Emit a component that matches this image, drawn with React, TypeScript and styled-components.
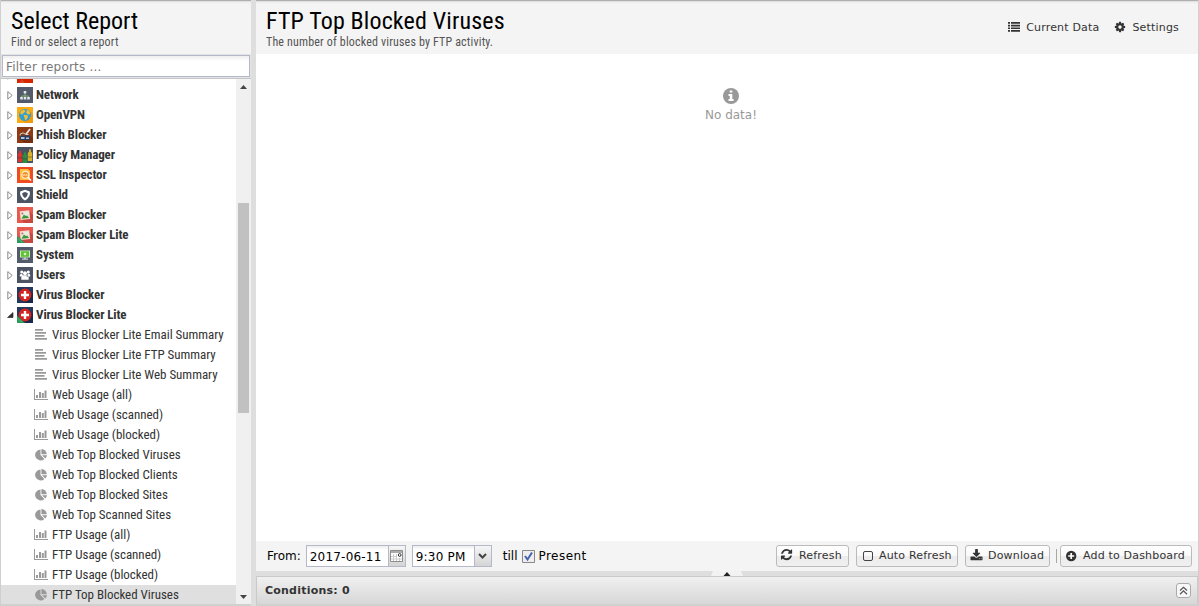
import React from 'react';
import styled, { createGlobalStyle } from 'styled-components';

type ReportIcon = 'text' | 'chart' | 'pie';

type CategoryIcon =
  | 'intrusion'
  | 'network'
  | 'openvpn'
  | 'phish'
  | 'policy'
  | 'ssl'
  | 'shield'
  | 'spam'
  | 'spamLite'
  | 'system'
  | 'users'
  | 'virus'
  | 'virusLite';

interface Category {
  name: string;
  icon: CategoryIcon;
  expanded?: boolean;
}

interface Report {
  name: string;
  icon: ReportIcon;
  selected?: boolean;
}

const categories: Category[] = [
  { name: 'Intrusion Prevention', icon: 'intrusion' },
  { name: 'Network', icon: 'network' },
  { name: 'OpenVPN', icon: 'openvpn' },
  { name: 'Phish Blocker', icon: 'phish' },
  { name: 'Policy Manager', icon: 'policy' },
  { name: 'SSL Inspector', icon: 'ssl' },
  { name: 'Shield', icon: 'shield' },
  { name: 'Spam Blocker', icon: 'spam' },
  { name: 'Spam Blocker Lite', icon: 'spamLite' },
  { name: 'System', icon: 'system' },
  { name: 'Users', icon: 'users' },
  { name: 'Virus Blocker', icon: 'virus' },
  { name: 'Virus Blocker Lite', icon: 'virusLite', expanded: true },
];

const reports: Report[] = [
  { name: 'Virus Blocker Lite Email Summary', icon: 'text' },
  { name: 'Virus Blocker Lite FTP Summary', icon: 'text' },
  { name: 'Virus Blocker Lite Web Summary', icon: 'text' },
  { name: 'Web Usage (all)', icon: 'chart' },
  { name: 'Web Usage (scanned)', icon: 'chart' },
  { name: 'Web Usage (blocked)', icon: 'chart' },
  { name: 'Web Top Blocked Viruses', icon: 'pie' },
  { name: 'Web Top Blocked Clients', icon: 'pie' },
  { name: 'Web Top Blocked Sites', icon: 'pie' },
  { name: 'Web Top Scanned Sites', icon: 'pie' },
  { name: 'FTP Usage (all)', icon: 'chart' },
  { name: 'FTP Usage (scanned)', icon: 'chart' },
  { name: 'FTP Usage (blocked)', icon: 'chart' },
  { name: 'FTP Top Blocked Viruses', icon: 'pie', selected: true },
];

const GlobalStyle = createGlobalStyle`
  * {
    box-sizing: border-box;
  }

  body {
    margin: 0;
    overflow: hidden;
    font-family: 'DejaVu Sans', sans-serif;
    font-size: 12px;
    color: #000;
  }

  svg {
    display: block;
    flex: none;
  }
`;

const Page = styled.div`
  display: flex;
  width: 1199px;
  height: 606px;
  padding: 0 1px;
  background: #cfcfcf;
`;

const Sidebar = styled.aside`
  display: flex;
  flex-direction: column;
  width: 250px;
  background: #f4f4f4;
`;

const VerticalSplitter = styled.div`
  width: 5px;
  background: #dedede;
`;

const Main = styled.main`
  display: flex;
  flex: 1;
  flex-direction: column;
  min-width: 0;
  background: #fff;
`;

const PanelHeader = styled.header`
  display: flex;
  justify-content: space-between;
  flex: none;
  height: 54px;
  padding: 8px 19px 0 10px;
  background: linear-gradient(#a9a9a9 0, #b5b5b5 1px, #d8d8d8 1px, #ececec 2px, #f4f4f4 4px);
`;

const HeaderTitle = styled.h1<{ $spacing?: number }>`
  margin: 0;
  font-family: 'Roboto Condensed', Roboto, sans-serif;
  font-size: 24px;
  font-weight: 400;
  line-height: 27px;
  letter-spacing: ${({ $spacing = 0 }) => $spacing}px;
  white-space: nowrap;
`;

const HeaderSubtitle = styled.div`
  font-family: 'Roboto Condensed', Roboto, sans-serif;
  font-size: 12px;
  line-height: 14px;
  letter-spacing: 0.16px;
  white-space: nowrap;
  color: #555;
`;

const HeaderActions = styled.div`
  display: flex;
  align-items: center;
  gap: 15px;
  height: 38px;
`;

const HeaderAction = styled.div`
  display: flex;
  align-items: center;
  gap: 6px;
  font-size: 11px;
  letter-spacing: 0.18px;
  color: #333;
`;

const FilterBar = styled.div`
  flex: none;
  height: 25px;
  padding: 1px;
  background: #e3e3e3;
  border-bottom: 1px solid #c6c6c6;
`;

const FilterInput = styled.input`
  display: block;
  width: 248px;
  height: 22px;
  padding: 2px 3px 0;
  border: 1px solid #b5b8c8;
  outline: none;
  background: linear-gradient(#eee, #fff 5px);
  font-family: 'DejaVu Sans', sans-serif;
  font-size: 12px;
  letter-spacing: 0.22px;

  &::placeholder {
    color: #777;
    opacity: 1;
  }
`;

const TreeArea = styled.div`
  display: flex;
  height: 525px;
  overflow: hidden;
  background: #fff;
`;

const Tree = styled.div`
  flex: 1;
  height: 525px;
  overflow: hidden;
  font-family: 'Roboto Condensed', Roboto, sans-serif;
  font-size: 13px;
  color: #333;
`;

const TreeRows = styled.div`
  margin-top: -14px;
`;

const NodeText = styled.span`
  padding-bottom: 2px;
  white-space: nowrap;
`;

const CategoryRow = styled.div`
  display: flex;
  align-items: center;
  height: 20px;
  padding-left: 5px;
  font-weight: 700;
  letter-spacing: -0.13px;

  svg:first-child {
    margin-right: 3px;
  }

  svg + svg {
    margin-right: 3px;
  }
`;

const ReportRow = styled.div<{ $selected?: boolean }>`
  display: flex;
  align-items: center;
  gap: 3px;
  height: 20px;
  padding-left: 33px;
  letter-spacing: -0.03px;
  background: ${({ $selected }) => ($selected ? '#dfdfdf' : 'transparent')};
`;

const ScrollTrack = styled.div`
  display: flex;
  flex-direction: column;
  justify-content: space-between;
  align-items: center;
  width: 15px;
  padding: 6px 2px 5px;
  background: #f0f0f0;
`;

const ScrollThumb = styled.div`
  width: 11px;
  height: 210px;
  margin-bottom: 68px;
  background: #c1c1c1;
`;

const BottomEdge = styled.div`
  height: 2px;
  background: #d0d0d0;
`;

const Content = styled.section`
  display: flex;
  flex: 1;
  flex-direction: column;
  align-items: center;
  gap: 3px;
  padding: 34px 0 0 8px;
  color: #999;
`;

const EmptyText = styled.div`
  font-size: 12px;
  line-height: 16px;
`;

const Toolbar = styled.div`
  display: flex;
  align-items: center;
  flex: none;
  height: 30px;
  padding: 0 6px 0 11px;
  background: #f4f4f4;
`;

const ToolbarLabel = styled.span<{ $spacing?: number }>`
  font-size: 12px;
  letter-spacing: ${({ $spacing = 0 }) => $spacing}px;
  white-space: nowrap;
`;

const PickerField = styled.div<{ $width: number }>`
  display: flex;
  width: ${({ $width }) => $width}px;
  height: 22px;
  border: 1px solid #b5b8c8;
  background: linear-gradient(#eee, #fff 4px);
`;

const PickerValue = styled.div`
  flex: 1;
  padding-left: 3px;
  line-height: 22px;
  letter-spacing: 0.2px;
  white-space: nowrap;
`;

const PickerTrigger = styled.div`
  display: flex;
  align-items: center;
  justify-content: center;
  width: 17px;
  border-left: 1px solid #b5b8c8;
  background: linear-gradient(#f6f6f6, #d4d4d4);
`;

const Spacer = styled.div<{ $width?: number }>`
  flex: ${({ $width }) => ($width ? `0 0 ${$width}px` : '1')};
`;

const ToolButton = styled.button<{ $width: number }>`
  display: flex;
  align-items: center;
  gap: 5px;
  width: ${({ $width }) => $width}px;
  height: 22px;
  padding: 0 0 1px 4px;
  border: 1px solid #bbb;
  border-radius: 3px;
  background: linear-gradient(#fff, #f9f9f9 48%, #ececec 52%, #f0f0f0);
  font-family: 'DejaVu Sans', sans-serif;
  font-size: 11px;
  letter-spacing: 0.18px;
  color: #333;
  white-space: nowrap;
`;

const Separator = styled.div`
  width: 1px;
  height: 14px;
  margin: 0 3px 0 6px;
  background: #aca899;
`;

const HorizontalSplitter = styled.div`
  display: flex;
  flex: none;
  justify-content: center;
  height: 5px;
  background: #dedede;
`;

const ConditionsBar = styled.footer`
  display: flex;
  align-items: center;
  justify-content: space-between;
  flex: none;
  height: 28px;
  padding: 0 6px 0 8px;
  border: 1px solid #c9c9c9;
  border-bottom: 0;
  background: linear-gradient(#f0f0f0, #d7d7d7);
  font-size: 11px;
  font-weight: 700;
  letter-spacing: 0.22px;
  color: #333;
`;

const CollapseTool = styled.div`
  display: flex;
  align-items: center;
  justify-content: center;
  width: 15px;
  height: 15px;
  border: 1px solid #aaa;
  border-radius: 3px;
  background: #f7f7f7;
`;

const REFRESH_PATH =
  'M1511 928q0 5-1 7-64 268-268 434.5t-478 166.5q-146 0-282.5-55t-243.5-157l-129 129q-19 19-45 19t-45-19-19-45v-448q0-26 19-45t45-19h448q26 0 45 19t19 45-19 45l-137 137q71 66 161 102t187 36q134 0 250-65t186-179q11-17 53-117 8-23 30-23h192q13 0 22.5 9.5t9.5 22.5zm25-800v448q0 26-19 45t-45 19h-448q-26 0-45-19t-19-45 19-45l138-138q-148-137-349-137-134 0-250 65t-186 179q-11 17-53 117-8 23-30 23h-199q-13 0-22.5-9.5t-9.5-22.5v-7q65-268 270-434.5t480-166.5q146 0 284 55.5t245 156.5l130-129q19-19 45-19t45 19 19 45z';
const DOWNLOAD_PATH =
  'M1344 1344q0-26-19-45t-45-19-45 19-19 45 19 45 45 19 45-19 19-45zm256 0q0-26-19-45t-45-19-45 19-19 45 19 45 45 19 45-19 19-45zm128-224v320q0 40-28 68t-68 28h-1472q-40 0-68-28t-28-68v-320q0-40 28-68t68-28h465l135 136q58 56 136 56t136-56l136-136h464q40 0 68 28t28 68zm-325-569q17 41-14 70l-448 448q-18 19-45 19t-45-19l-448-448q-31-29-14-70 17-39 59-39h256v-448q0-26 19-45t45-19h256q26 0 45 19t19 45v448h256q42 0 59 39z';
const COG_PATH =
  'M1152 896q0-106-75-181t-181-75-181 75-75 181 75 181 181 75 181-75 75-181zm512-109v222q0 12-8 23t-20 13l-185 28q-19 54-39 91 35 50 107 138 10 12 10 25t-9 23q-27 37-99 108t-94 71q-12 0-26-9l-138-108q-44 23-91 38-16 136-29 186-7 28-36 28h-222q-14 0-24.5-8.5t-11.5-21.5l-28-184q-49-16-90-37l-141 107q-10 9-25 9-14 0-25-11-126-114-165-168-7-10-7-23 0-12 8-23 15-21 51-66.5t54-70.5q-27-50-41-99l-183-27q-13-2-21-12.5t-8-23.5v-222q0-12 8-23t19-13l186-28q14-46 39-92-40-57-107-138-10-12-10-24 0-10 9-23 26-36 98.5-107.5t94.5-71.5q13 0 26 10l138 107q44-23 91-38 16-136 29-186 7-28 36-28h222q14 0 24.5 8.5t11.5 21.5l28 184q49 16 90 37l142-107q9-9 24-9 13 0 25 10 129 119 165 170 7 8 7 22 0 12-8 23-15 21-51 66.5t-54 70.5q26 50 41 98l183 28q13 2 21 12.5t8 23.5z';

const SolidIcon: React.FC<{ path: string; size?: number }> = ({ path, size = 14 }) => (
  <svg width={size} height={size} viewBox="0 0 1792 1792" fill="currentColor">
    <path d={path} />
  </svg>
);

const LITE_CORNER = (
  <>
    <path d="M0 8.5 L8 16 H0 Z" fill="#2d9a5b" />
    <path d="M1.5 12 L5 15.2" stroke="#8fd0a8" strokeWidth=".8" strokeDasharray="1 .7" />
  </>
);

const spamArt = (
  <>
    <rect width="16" height="16" fill="#e8584f" />
    <path d="M12 4 L16 8 V16 H7 L4 12 Z" fill="#c94741" />
    <g transform="rotate(-6 8 8.5)">
      <rect x="3.2" y="3.8" width="9.6" height="8.6" fill="#f3d8cb" />
      <rect x="4.2" y="4.8" width="7.6" height="6.6" fill="#e6ece0" />
      <path d="M4.2 11.4 L7 7.4 L9 9.4 L10 8.4 L11.8 11.4 Z" fill="#3c963c" />
      <circle cx="5.6" cy="6.2" r="1" fill="#d9625a" />
    </g>
  </>
);

const virusArt = (
  <>
    <rect width="16" height="16" fill="#22395d" />
    <path d="M13 4 L16 7 V16 H8 L4 12 Z" fill="#182a49" />
    <circle cx="8" cy="8" r="6.4" fill="#d3241f" />
    <path d="M6.8 4 h2.4 v2.8 H12 v2.4 H9.2 V12 H6.8 V9.2 H4 V6.8 H6.8 Z" fill="#fff" />
  </>
);

const categoryArt: Record<CategoryIcon, React.ReactNode> = {
  intrusion: (
    <>
      <rect width="16" height="16" fill="#d62500" />
      <path d="M2 16 L5 12 L8 16 Z" fill="#dc4023" />
    </>
  ),
  network: (
    <>
      <rect width="16" height="16" fill="#525a6b" />
      <path d="M8 6 V9 M4.5 10.5 V9 H11.5 V10.5 M8 9 V11" stroke="#7fb06f" fill="none" />
      <path d="M6.7 4 h2.6 v2.5 H6.7 z M3.2 10 h2.6 v2.5 H3.2 z M6.7 10 h2.6 v2.5 H6.7 z M10.2 10 h2.6 v2.5 h-2.6 z" fill="#e3e6ea" />
    </>
  ),
  openvpn: (
    <>
      <rect width="16" height="16" fill="#fbac14" />
      <path d="M13 4 L16 7 V16 H8 L4 12 Z" fill="#f19a0a" />
      <circle cx="8" cy="8" r="6" fill="#2d9fd2" />
      <path d="M4 4 L7 2.4 L8.5 4.5 L6.5 6 L5 7.5 L3 6.5 Z M8.5 2.2 L12.5 4.2 L13.2 7 L11 7.5 L9 5.5 L10 4 Z M6.5 7.8 L10.5 8.2 L11 10 L9 13 L7.8 12.5 L7.5 10.2 Z" fill="#f9bc35" />
    </>
  ),
  phish: (
    <>
      <rect width="16" height="16" fill="#8f3a12" />
      <path d="M12 8 L16 11 V16 H8 L3 12 Z" fill="#76300f" />
      <path d="M3 8.5 H13 V13 H3 Z" fill="#263f63" />
      <path d="M4 10 h3.5 v2 H4 z M9 10.5 h3 v1.5 H9 z" fill="#b9c2cf" />
      <path d="M13 2 L9 7.2" stroke="#e8e8e8" strokeWidth="1.7" />
      <path d="M3.2 8.5 V7 L6 5.8 L9 7.5 H11.5" stroke="#d7cfc8" fill="none" />
    </>
  ),
  policy: (
    <>
      <rect width="16" height="16" fill="#4b5262" />
      <path d="M.8 7.5 Q.8 6 2 6 V3.8 h2 V6 Q5.2 6 5.2 7.5 V15 H.8 z" fill="#d8362c" />
      <path d="M5.8 9 Q5.8 7.5 7 7.5 V5.2 h2 V7.5 Q10.2 7.5 10.2 9 V16 H5.8 z" fill="#2c8f3d" />
      <path d="M10.8 6.5 Q10.8 5 12 5 V2.4 h2 V5 Q15.2 5 15.2 6.5 V14 h-4.4 z" fill="#d9b42a" />
      <path d="M.8 10.8 h4.4 M5.8 11.8 h4.4 M10.8 10 h4.4" stroke="#33303a" strokeWidth=".8" opacity=".6" />
    </>
  ),
  ssl: (
    <>
      <rect width="16" height="16" fill="#ef4a23" />
      <path d="M3 2 h8 l2 2 v9 H3 z" fill="#fdc03d" />
      <circle cx="8.3" cy="7.8" r="3.4" fill="#f58a2c" stroke="#fdf0d5" strokeWidth="1.1" />
      <path d="M6.5 9 V7.5 h1.4 V9 M9 9 V7.5 h1 V9" stroke="#fde3a8" strokeWidth=".8" fill="none" />
      <path d="M11 10.5 L14 13.5" stroke="#fff" strokeWidth="1.6" />
    </>
  ),
  shield: (
    <>
      <rect width="16" height="16" fill="#4c5363" />
      <path d="M8 2.8 L12.8 4.4 Q14 9.8 8 13.4 Q2 9.8 3.2 4.4 Z" fill="#fff" />
      <path d="M8 5 L10.7 6 Q11 9 8 10.9 Q5 9 5.3 6 Z" fill="#4c5363" />
    </>
  ),
  spam: spamArt,
  spamLite: (
    <>
      {spamArt}
      {LITE_CORNER}
    </>
  ),
  system: (
    <>
      <rect width="16" height="16" fill="#525a6b" />
      <path d="M3 3.5 h10 v7 H3 z" fill="#c9edb5" />
      <path d="M4 4.2 h8 v5.6 H4 z" fill="#61c136" />
      <circle cx="8" cy="7" r="1.3" fill="#d9f2cc" />
      <path d="M7 10.5 h2 v1 h2 v1.2 H5 v-1.2 h2 z" fill="#c3c8cf" />
    </>
  ),
  users: (
    <>
      <rect width="16" height="16" fill="#4c5363" />
      <g fill="#fff">
        <circle cx="4.7" cy="5" r="1.5" />
        <circle cx="11.3" cy="5" r="1.5" />
        <circle cx="8" cy="6.3" r="2" />
        <path d="M2.8 9.5 V8 Q3 6.7 5 6.7 L6.5 9.5 Z M13.2 9.5 V8 Q13 6.7 11 6.7 L9.5 9.5 Z M4.3 12.8 V10.5 Q4.5 8.3 6.5 8.3 H9.5 Q11.5 8.3 11.7 10.5 V12.8 Z" />
      </g>
    </>
  ),
  virus: virusArt,
  virusLite: (
    <>
      {virusArt}
      {LITE_CORNER}
    </>
  ),
};

const reportArt: Record<ReportIcon, React.ReactNode> = {
  text: <path d="M1 1h8v1.8H1z M1 4h11v1.8H1z M1 7h9.5v1.8H1z M1 10h12v1.8H1z" />,
  chart: (
    <path d="M0 1h1v10h13v1H0z M2 7h2v3H2z M5 4h2v6H5z M7.8 5h2v5h-2z M10.5 2.5h2V10h-2z" />
  ),
  pie: (
    <path d="M6.5 1.4 V7 L10.4 10.9 A5.5 5.5 0 1 1 6.5 1.4 Z M8 7.2 H13 A5.5 5.5 0 0 1 11.3 10.5 Z M7.4 .9 A5.2 5.2 0 0 1 12.7 6.2 H7.4 Z" />
  ),
};

const Expander: React.FC<{ expanded?: boolean }> = ({ expanded }) => (
  <svg width="8" height="16" viewBox="0 0 8 16">
    {expanded ? (
      <path d="M7 5.5 V10.5 H1.5 Z" fill="#333" stroke="#222" strokeWidth=".6" />
    ) : (
      <path d="M1.8 4.6 V12.2 L6.2 8.4 Z" fill="#fff" stroke="#8a8a8a" />
    )}
  </svg>
);

const ScrollArrow: React.FC<{ down?: boolean }> = ({ down }) => (
  <svg width="7" height="4" viewBox="0 0 7 4">
    <path d={down ? 'M0 0 H7 L3.5 4 Z' : 'M0 4 H7 L3.5 0 Z'} fill="#444" />
  </svg>
);

const ReportTree: React.FC = () => (
  <TreeArea>
    <Tree>
      <TreeRows>
        {categories.map(({ name, icon, expanded }) => (
          <CategoryRow key={name}>
            <Expander expanded={expanded} />
            <svg width="16" height="16" viewBox="0 0 16 16">
              {categoryArt[icon]}
            </svg>
            <NodeText>{name}</NodeText>
          </CategoryRow>
        ))}
        {reports.map(({ name, icon, selected }) => (
          <ReportRow key={name} $selected={selected}>
            <svg width="15" height="14" viewBox="0 0 15 14" fill="#999">
              {reportArt[icon]}
            </svg>
            <NodeText>{name}</NodeText>
          </ReportRow>
        ))}
      </TreeRows>
    </Tree>
    <ScrollTrack>
      <ScrollArrow />
      <ScrollThumb />
      <ScrollArrow down />
    </ScrollTrack>
  </TreeArea>
);

const DateToolbar: React.FC = () => (
  <Toolbar>
    <ToolbarLabel>From:</ToolbarLabel>
    <Spacer $width={5} />
    <PickerField $width={100}>
      <PickerValue>2017-06-11</PickerValue>
      <PickerTrigger>
        <svg width="13" height="13" viewBox="0 0 13 13">
          <path d="M.5 .5 H12.5 V11.5 H.5 Z" fill="#fff" stroke="#8c8c8c" />
          <path d="M1 1 H12 V3 H1 Z" fill="#aaa" />
          <path d="M3.5 4 V11 M6.5 4 V11 M9.5 8 V11 M1 6.5 H7 M1 9 H12" stroke="#ccc" />
          <path d="M7.5 3 h4.5 v4.5 H7.5 z" fill="#fff" />
          <circle cx="9.7" cy="5" r="1.4" fill="none" stroke="#333" />
        </svg>
      </PickerTrigger>
    </PickerField>
    <Spacer $width={6} />
    <PickerField $width={80}>
      <PickerValue>9:30 PM</PickerValue>
      <PickerTrigger>
        <svg width="9" height="6" viewBox="0 0 9 6">
          <path d="M1 1 L4.5 4.5 L8 1" stroke="#444" strokeWidth="2" fill="none" />
        </svg>
      </PickerTrigger>
    </PickerField>
    <Spacer $width={11} />
    <ToolbarLabel>till</ToolbarLabel>
    <Spacer $width={4} />
    <svg width="13" height="13" viewBox="0 0 13 13">
      <path d="M.5 .5 H12.5 V12.5 H.5 Z" fill="#eee" stroke="#888" />
      <path d="M3 6 L5.5 9.5 L10 2.5" stroke="#4664b4" strokeWidth="2" fill="none" />
    </svg>
    <Spacer $width={4} />
    <ToolbarLabel $spacing={0.45}>Present</ToolbarLabel>
    <Spacer />
    <ToolButton $width={73}>
      <SolidIcon path={REFRESH_PATH} size={13} />
      Refresh
    </ToolButton>
    <Spacer $width={7} />
    <ToolButton $width={102}>
      <svg width="13" height="12" viewBox="0 0 13 12">
        <rect x="2.5" y="1.5" width="9" height="9" rx="1.5" fill="none" stroke="#444" />
      </svg>
      Auto Refresh
    </ToolButton>
    <Spacer $width={7} />
    <ToolButton $width={85}>
      <SolidIcon path={DOWNLOAD_PATH} size={13} />
      Download
    </ToolButton>
    <Separator />
    <ToolButton $width={132}>
      <svg width="13" height="13" viewBox="0 0 13 13">
        <circle cx="6.2" cy="7" r="5.2" fill="#333" />
        <path d="M6.2 4 V10 M3.2 7 H9.2" stroke="#fff" strokeWidth="1.7" />
      </svg>
      Add to Dashboard
    </ToolButton>
  </Toolbar>
);

const App: React.FC = () => (
  <>
    <GlobalStyle />
    <Page>
      <Sidebar>
        <PanelHeader>
          <div>
            <HeaderTitle>Select Report</HeaderTitle>
            <HeaderSubtitle>Find or select a report</HeaderSubtitle>
          </div>
        </PanelHeader>
        <FilterBar>
          <FilterInput placeholder="Filter reports ..." />
        </FilterBar>
        <ReportTree />
        <BottomEdge />
      </Sidebar>
      <VerticalSplitter />
      <Main>
        <PanelHeader>
          <div>
            <HeaderTitle $spacing={0.15}>FTP Top Blocked Viruses</HeaderTitle>
            <HeaderSubtitle>The number of blocked viruses by FTP activity.</HeaderSubtitle>
          </div>
          <HeaderActions>
            <HeaderAction>
              <svg width="12" height="10" viewBox="0 0 12 10" fill="#333">
                <path d="M0 0h2v1.7H0z M3 0h9v1.7H3z M0 2.7h2v1.7H0z M3 2.7h9v1.7H3z M0 5.4h2v1.7H0z M3 5.4h9v1.7H3z M0 8.1h2v1.7H0z M3 8.1h9v1.7H3z" />
              </svg>
              Current Data
            </HeaderAction>
            <HeaderAction>
              <SolidIcon path={COG_PATH} size={12} />
              Settings
            </HeaderAction>
          </HeaderActions>
        </PanelHeader>
        <Content>
          <svg width="16" height="16" viewBox="0 0 16 16">
            <circle cx="8" cy="8" r="8" fill="#999" />
            <path d="M6.7 2.5 h2.6 v2.1 H6.7 z M5.5 6 h3.8 v5 h1.3 v1.9 H5.5 V11 h1.3 V7.9 H5.5 z" fill="#fff" />
          </svg>
          <EmptyText>No data!</EmptyText>
        </Content>
        <DateToolbar />
        <HorizontalSplitter>
          <svg width="32" height="5" viewBox="0 0 32 5">
            <path d="M2 0 H30 L32 5 H0 Z" fill="#f2f2f2" />
            <path d="M12.5 5 L16 1 L19.5 5 Z" fill="#222" />
          </svg>
        </HorizontalSplitter>
        <ConditionsBar>
          Conditions: 0
          <CollapseTool>
            <svg width="9" height="9" viewBox="0 0 9 9">
              <path d="M1 4.5 L4.5 1.2 L8 4.5 M1 8.2 L4.5 4.9 L8 8.2" stroke="#555" strokeWidth="1.2" fill="none" />
            </svg>
          </CollapseTool>
        </ConditionsBar>
        <BottomEdge />
      </Main>
    </Page>
  </>
);

export default App;
